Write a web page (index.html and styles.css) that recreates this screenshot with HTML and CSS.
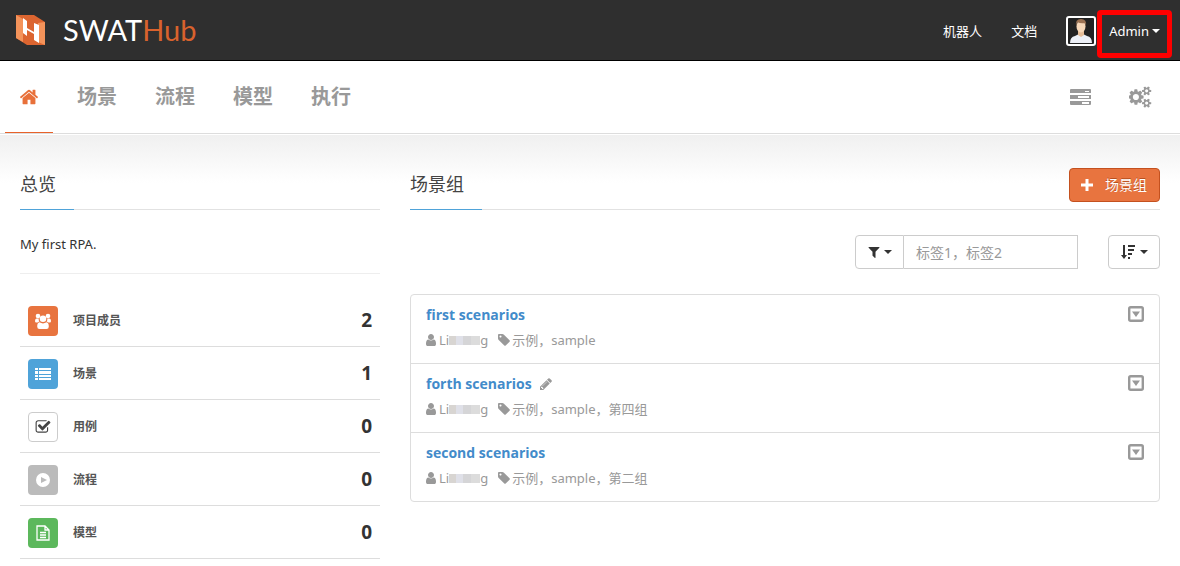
FILE: index.html
```html
<!DOCTYPE html>
<html lang="zh-CN">
<head>
<meta charset="utf-8">
<meta name="viewport" content="width=device-width, initial-scale=1">
<title>SWATHub</title>
<link rel="stylesheet" href="styles.css">
</head>
<body>
<svg class="sprite" aria-hidden="true">
  <symbol id="home" viewBox="0 0 1792 1792"><path d="M1472 992v480q0 26-19 45t-45 19h-384v-384h-256v384h-384q-26 0-45-19t-19-45v-480q0-1 .5-3t.5-3l575-474 575 474q1 2 1 6zm223-69l-62 74q-8 9-21 11h-3q-13 0-21-7l-692-577-692 577q-12 8-24 7-13-2-21-11l-62-74q-8-10-7-23.5t11-21.5l719-599q32-26 76-26t76 26l244 204v-195q0-14 9-23t23-9h192q14 0 23 9t9 23v408l219 182q10 8 11 21.5t-7 23.5z"/></symbol>
  <symbol id="user" viewBox="0 0 1792 1792"><path d="M1536 1399q0 109-62.500 187t-150.500 78h-854q-88 0-150.500-78t-62.500-187q0-85 8.500-160.500t31.500-152 58.500-131 94-89 134.500-34.500q131 128 313 128t313-128q76 0 134.500 34.500t94 89 58.500 131 31.500 152 8.500 160.500zm-256-887q0 159-112.500 271.500t-271.500 112.500-271.500-112.500-112.500-271.500 112.500-271.500 271.500-112.500 271.500 112.500 112.500 271.500z"/></symbol>
  <symbol id="tag" viewBox="0 0 1792 1792"><path d="M576 448q0-53-37.500-90.500t-90.500-37.500-90.500 37.500-37.500 90.500 37.500 90.500 90.500 37.500 90.500-37.500 37.500-90.500zm1067 576q0 53-37 90l-491 492q-39 37-91 37-53 0-90-37l-715-716q-38-37-64.500-101t-26.500-117v-416q0-52 38-90t90-38h416q53 0 117 26.500t102 64.500l715 714q37 39 37 91z"/></symbol>
  <symbol id="pencil" viewBox="0 0 1792 1792"><path d="M491 1536l91-91-235-235-91 91v107h128v128h107zm523-928q0-22-22-22-10 0-17 7l-542 542q-7 7-7 17 0 22 22 22 10 0 17-7l542-542q7-7 7-17zm-54-192l416 416-832 832h-416v-416zm683 96q0 53-37 90l-166 166-416-416 166-165q36-38 90-38 53 0 91 38l235 234q37 39 37 91z"/></symbol>
  <symbol id="filter" viewBox="0 0 1792 1792"><path d="M1595 295q17 41-14 70l-493 493v742q0 42-39 59-13 5-25 5-27 0-45-19l-256-256q-19-19-19-45v-486l-493-493q-31-29-14-70 17-39 59-39h1280q42 0 59 39z"/></symbol>
  <symbol id="check" viewBox="0 0 1792 1792"><path d="M1472 930v318q0 119-84.500 203.500t-203.500 84.500h-832q-119 0-203.500-84.500t-84.500-203.500v-832q0-119 84.500-203.500t203.500-84.500h832q63 0 117 25 15 7 18 23 3 17-9 29l-49 49q-10 10-23 10-3 0-9-2-23-6-45-6h-832q-66 0-113 47t-47 113v832q0 66 47 113t113 47h832q66 0 113-47t47-113v-254q0-13 9-22l64-64q10-10 23-10 6 0 12 3 20 8 20 29zm231-489l-814 814q-24 24-57 24t-57-24l-430-430q-24-24-24-57t24-57l110-110q24-24 57-24t57 24l263 263 647-647q24-24 57-24t57 24l110 110q24 24 24 57t-24 57z"/></symbol>
  <symbol id="cogs" viewBox="0 0 1920 1792"><path d="M832 896q0-106-75-181t-181-75-181 75-75 181 75 181 181 75 181-75 75-181zm768 512q0-52-38-90t-90-38-90 38-38 90q0 53 37.500 90.500t90.500 37.500 90.500-37.500 37.500-90.500zm0-1024q0-52-38-90t-90-38-90 38-38 90q0 53 37.500 90.500t90.500 37.500 90.500-37.500 37.500-90.500zm-384 421v185q0 10-7 19.500t-16 10.500l-155 24q-11 35-32 76 34 48 90 115 7 11 7 20 0 12-7 19-23 30-82.500 89.500t-78.500 59.500q-11 0-21-7l-115-90q-37 19-77 31-11 108-23 155-7 24-30 24h-186q-11 0-20-7.500t-10-17.500l-23-153q-34-10-75-31l-118 89q-7 7-20 7-11 0-21-8-144-133-144-160 0-9 7-19 10-14 41-53t47-61q-23-44-35-82l-152-24q-10-1-17-9.500t-7-19.500v-185q0-10 7-19.500t16-10.500l155-24q11-35 32-76-34-48-90-115-7-11-7-20 0-12 7-20 22-30 82-89t79-59q11 0 21 7l115 90q34-18 77-32 11-108 23-154 7-24 30-24h186q11 0 20 7.500t10 17.500l23 153q34 10 75 31l118-89q8-7 20-7 11 0 21 8 144 133 144 160 0 8-7 19-12 16-42 54t-45 60q23 48 34 82l152 23q10 2 17 10.500t7 19.500zm640 533v140q0 16-149 31-12 27-30 52 51 113 51 138 0 4-4 7-122 71-124 71-8 0-46-47t-52-68q-20 2-30 2t-30-2q-14 21-52 68t-46 47q-2 0-124-71-4-3-4-7 0-25 51-138-18-25-30-52-149-15-149-31v-140q0-16 149-31 13-29 30-52-51-113-51-138 0-4 4-7 4-2 35-20t59-34 30-16q8 0 46 46.500t52 67.500q20-2 30-2t30 2q51-71 92-112l6-2q4 0 124 70 4 3 4 7 0 25-51 138 17 23 30 52 149 15 149 31zm0-1024v140q0 16-149 31-12 27-30 52 51 113 51 138 0 4-4 7-122 71-124 71-8 0-46-47t-52-68q-20 2-30 2t-30-2q-14 21-52 68t-46 47q-2 0-124-71-4-3-4-7 0-25 51-138-18-25-30-52-149-15-149-31v-140q0-16 149-31 13-29 30-52-51-113-51-138 0-4 4-7 4-2 35-20t59-34 30-16q8 0 46 46.500t52 67.500q20-2 30-2t30 2q51-71 92-112l6-2q4 0 124 70 4 3 4 7 0 25-51 138 17 23 30 52 149 15 149 31z"/></symbol>
  <symbol id="tasks" viewBox="0 0 21 16"><path fill-rule="evenodd" d="M1 0h19q1 0 1 1v3H0V1q0-1 1-1zm14 2v1h4V2zM0 6h21v4H0zm8 1v2h11V7zM0 12h21v3q0 1-1 1H1q-1 0-1-1zm12 1v2h7v-2z"/></symbol>
  <symbol id="users" viewBox="0 0 18 18"><circle cx="4" cy="4" r="2.300"/><circle cx="14" cy="4" r="2.300"/><path d="M1 9q0-2.500 1.500-2.500h2.200q-.3 2 .7 3-1.200.3-1.800 1H2.200Q1 10.500 1 9zM17 9q0-2.500-1.500-2.500h-2.200q.3 2-.7 3 1.200.3 1.800 1h1.400q1.200 0 1.200-1.500z"/><circle cx="9" cy="6.800" r="3.300"/><path d="M5.500 10.300q3.500 2.200 7 0 2.300.5 2.300 4.200 0 2.500-2.300 2.500h-7q-2.300 0-2.300-2.500 0-3.700 2.300-4.200z"/></symbol>
  <symbol id="list" viewBox="0 0 16 12"><path d="M0 0h3v2H0zM4 0h12v2H4zM0 3h3v3H0zM4 3h12v3H4zM0 7h3v2H0zM4 7h12v2H4zM0 10h3v2H0zM4 10h12v2H4z"/></symbol>
  <symbol id="play" viewBox="0 0 14 14"><path fill-rule="evenodd" d="M7 0a7 7 0 1 1 0 14a7 7 0 1 1 0-14zM5 4v6l6-3z"/></symbol>
  <symbol id="file" viewBox="0 0 14 16"><path fill="none" stroke="currentColor" stroke-width="1.300" d="M1 1h8l4 4v10H1zM9 1v4h4M4 7.500h6M4 10h6M4 12.500h6"/></symbol>
  <symbol id="plus" viewBox="0 0 12 12"><path d="M4.500 0h3v4.500H12v3H7.500V12h-3V7.500H0v-3h4.500z"/></symbol>
  <symbol id="sort" viewBox="0 0 14 14"><path d="M2 0h2v10h2l-3 4-3-4h2zM7 0h7v2H7zM7 4h6v2H7zM7 8h4v2H7zM7 12h2v2H7z"/></symbol>
  <symbol id="drop" viewBox="0 0 16 16"><rect x="1.200" y="1.200" width="13.600" height="13.600" rx="1.500" fill="none" stroke="currentColor" stroke-width="2.400"/><path d="M4 5.500h8L8 11z"/></symbol>
</svg>

<header class="topbar">
  <a class="brand" href="#">
    <svg class="brand-mark" viewBox="0 0 30 30" aria-hidden="true">
      <path fill="#dc6530" d="M0 0h18l11 7v23H11L0 23z"/>
      <path fill="#f4935a" d="M0 0l7 4v23L0 23z"/>
      <path fill="#f4935a" d="M22 8l7-1v23l-7-3z"/>
      <path fill="#fff" d="M7 3l4 3v7l7 4V8l5 2v18l-5-3v-6l-7-4v6l-4-3z"/>
    </svg>
    <span class="brand-name">SWAT<span class="brand-hub">Hub</span></span>
  </a>
  <nav class="account">
    <a href="#">机器人</a>
    <a href="#">文档</a>
    <button class="user-menu" type="button">
      <svg class="avatar" viewBox="0 0 30 30" aria-hidden="true">
        <rect x="1" y="1" width="28" height="28" rx="2" fill="#222" stroke="#fff" stroke-width="2"/>
        <path fill="#edf0f7" d="M4 27q0-6 5-7l4-2h4l4 2q5 1 5 7z"/>
        <path fill="#e6bd98" d="M12 14h6v5l-3 2-3-2z"/>
        <ellipse cx="15" cy="10.500" rx="4.500" ry="6" fill="#f7d8b9"/>
        <path fill="#9d7354" d="M10 10q-1-7 5-7t5 7l-1-3q-4 1-8-1z"/>
      </svg>
      <span class="user-name">Admin<i class="caret"></i></span>
    </button>
  </nav>
</header>

<nav class="mainnav">
  <a class="tab active" href="#" aria-label="主页"><svg class="i20"><use href="#home"/></svg></a>
  <a class="tab" href="#">场景</a>
  <a class="tab" href="#">流程</a>
  <a class="tab" href="#">模型</a>
  <a class="tab" href="#">执行</a>
  <div class="tools">
    <a href="#" aria-label="任务"><svg class="tasks"><use href="#tasks"/></svg></a>
    <a href="#" aria-label="设置"><svg class="cogs"><use href="#cogs"/></svg></a>
  </div>
</nav>

<main class="page">
  <section class="overview">
    <div class="head"><h2>总览</h2></div>
    <p class="desc">My first RPA.</p>
    <ul class="stats">
      <li><span class="badge orange"><svg class="i18"><use href="#users"/></svg></span><span class="label">项目成员</span><b>2</b></li>
      <li><span class="badge blue"><svg class="i16"><use href="#list"/></svg></span><span class="label">场景</span><b>1</b></li>
      <li><span class="badge plain"><svg class="i16"><use href="#check"/></svg></span><span class="label">用例</span><b>0</b></li>
      <li><span class="badge gray"><svg class="i14"><use href="#play"/></svg></span><span class="label">流程</span><b>0</b></li>
      <li><span class="badge green"><svg class="i16"><use href="#file"/></svg></span><span class="label">模型</span><b>0</b></li>
    </ul>
  </section>

  <section class="groups">
    <div class="head">
      <h2>场景组</h2>
      <button class="primary" type="button"><svg class="i12"><use href="#plus"/></svg>场景组</button>
    </div>
    <div class="filters">
      <div class="search">
        <button class="btn" type="button" aria-label="过滤"><svg class="i14"><use href="#filter"/></svg><i class="caret"></i></button>
        <input type="text" placeholder="标签1，标签2" aria-label="标签">
      </div>
      <button class="btn sort" type="button" aria-label="排序"><svg class="i14"><use href="#sort"/></svg><i class="caret"></i></button>
    </div>
    <ul class="list">
      <li>
        <div class="info">
          <div class="title"><a href="#">first scenarios</a></div>
          <div class="meta"><svg class="i14"><use href="#user"/></svg><span class="owner">Li<i class="mask"></i>g</span><svg class="i14"><use href="#tag"/></svg><span>示例，sample</span></div>
        </div>
        <button class="more" type="button" aria-label="更多"><svg class="i16"><use href="#drop"/></svg></button>
      </li>
      <li>
        <div class="info">
          <div class="title"><a href="#">forth scenarios</a><svg class="i14"><use href="#pencil"/></svg></div>
          <div class="meta"><svg class="i14"><use href="#user"/></svg><span class="owner">Li<i class="mask"></i>g</span><svg class="i14"><use href="#tag"/></svg><span>示例，sample，第四组</span></div>
        </div>
        <button class="more" type="button" aria-label="更多"><svg class="i16"><use href="#drop"/></svg></button>
      </li>
      <li>
        <div class="info">
          <div class="title"><a href="#">second scenarios</a></div>
          <div class="meta"><svg class="i14"><use href="#user"/></svg><span class="owner">Li<i class="mask"></i>g</span><svg class="i14"><use href="#tag"/></svg><span>示例，sample，第二组</span></div>
        </div>
        <button class="more" type="button" aria-label="更多"><svg class="i16"><use href="#drop"/></svg></button>
      </li>
    </ul>
  </section>
</main>
</body>
</html>
```
FILE: styles.css
```css
* { box-sizing: border-box; }
body {
  margin: 0;
  background: #fff;
  color: #333;
  font: 13px/20px "Noto Sans", "Noto Sans CJK SC", sans-serif;
}
a { color: inherit; text-decoration: none; }
h2, p, ul { margin: 0; padding: 0; }
ul { list-style: none; }
button, input { font: inherit; color: inherit; }
button { cursor: pointer; }
svg { display: block; flex: none; fill: currentColor; }
.sprite { position: absolute; width: 0; height: 0; }
.i12 { width: 12px; height: 12px; }
.i14 { width: 14px; height: 14px; }
.i16 { width: 16px; height: 16px; }
.i18 { width: 18px; height: 18px; }
.i20 { width: 20px; height: 20px; }
.caret {
  display: inline-block;
  border: 4px solid transparent;
  border-top-color: currentColor;
  border-bottom: 0;
}

.topbar {
  display: flex;
  justify-content: space-between;
  align-items: center;
  height: 61px;
  padding: 0 20px 0 16px;
  background: #2f2f2f;
  border-bottom: 1px solid #000;
  color: #fff;
}
.brand { display: flex; align-items: center; gap: 17px; }
.brand-mark { width: 30px; height: 30px; }
.brand-name { font: 29px/40px Lato, sans-serif; }
.brand-hub { color: #d9622d; }
.account { display: flex; align-items: center; gap: 29px; padding-top: 1px; }
.user-menu {
  display: flex;
  align-items: center;
  gap: 13px;
  padding: 0;
  border: 0;
  background: none;
}
.avatar { width: 30px; height: 30px; }
.user-name { position: relative; display: flex; align-items: center; gap: 3px; }
.user-name::after {
  content: "";
  position: absolute;
  inset: -11px -12px -17px;
  border: 5px solid #f00;
  border-radius: 4px;
}

.mainnav {
  display: flex;
  height: 73px;
  padding: 0 28px 0 5px;
  border-bottom: 1px solid #ddd;
  color: #999;
}
.tab {
  display: flex;
  align-items: center;
  justify-content: center;
  width: 78px;
  font-size: 20px;
  font-weight: 700;
}
.tab.active {
  width: 48px;
  margin-right: 5px;
  border-bottom: 1px solid #e8622a;
  color: #e8703a;
}
.tools { display: flex; align-items: center; gap: 38px; margin-left: auto; }
.tasks { width: 21px; height: 16px; }
.cogs { width: 23px; height: 22px; }

.page {
  display: grid;
  grid-template-columns: 360px 1fr;
  gap: 30px;
  margin-top: 1px;
  padding: 29px 20px 0;
  background: linear-gradient(#f0f0f0, #fff 48px);
}
.head {
  display: flex;
  justify-content: space-between;
  height: 46px;
  border-bottom: 1px solid #e2e2e2;
}
.head h2 {
  height: 46px;
  padding-right: 18px;
  border-bottom: 1px solid #4fa3d9;
  color: #444;
  font-size: 18px;
  font-weight: 400;
  line-height: 40px;
}
.desc { margin-bottom: 20px; padding: 24px 0 19px; border-bottom: 1px solid #eee; }
.stats li {
  display: flex;
  align-items: center;
  height: 53px;
  padding: 0 8px;
  border-bottom: 1px solid #ddd;
}
.badge, .label { margin-top: 2px; }
.badge {
  display: flex;
  align-items: center;
  justify-content: center;
  width: 30px;
  height: 30px;
  margin-right: 15px;
  border-radius: 4px;
  color: #fff;
}
.orange { background: #e8743f; }
.blue { background: #4fa3d9; }
.plain { border: 1px solid #ccc; color: #444; }
.gray { background: #bbb; }
.green { background: #5cb85c; }
.label { font-size: 12px; font-weight: 700; color: #555; }
.stats b { margin-left: auto; font-size: 19px; }

.primary {
  display: flex;
  align-items: center;
  gap: 12px;
  height: 34px;
  margin-top: 4px;
  padding: 0 12px 0 11px;
  border: 1px solid #c4511f;
  border-radius: 4px;
  background: #e8743f;
  color: #fff;
  font-size: 14px;
  text-shadow: 0 -1px 0 #b85020;
}
.filters { display: flex; justify-content: flex-end; gap: 30px; margin: 25px 0; }
.search { display: flex; }
.btn {
  display: flex;
  align-items: center;
  justify-content: center;
  gap: 3px;
  width: 49px;
  height: 34px;
  padding: 0;
  border: 1px solid #ccc;
  border-radius: 4px 0 0 4px;
  background: #fff;
}
.btn.sort { gap: 5px; width: 52px; border-radius: 4px; }
.search input {
  width: 174px;
  height: 34px;
  padding: 0 12px;
  border: 1px solid #ccc;
  border-left: 0;
  background: #fff;
  font-size: 14px;
}
.search input::placeholder { color: #999; opacity: 1; }

.list { border: 1px solid #ddd; border-radius: 4px; }
.list li {
  display: flex;
  justify-content: space-between;
  align-items: flex-start;
  padding: 10px 15px 13px;
}
.list li + li { border-top: 1px solid #ddd; }
.title { display: flex; align-items: center; gap: 7px; margin-bottom: 5px; color: #999; }
.title a { color: #428bca; font-family: "Open Sans", sans-serif; font-size: 14px; font-weight: 700; }
.meta { display: flex; align-items: center; color: #999; }
.meta svg:first-child { margin-left: -2px; }
.meta svg { margin-right: 1px; }
.owner { display: flex; align-items: center; margin-right: 9px; }
.mask {
  width: 31px;
  height: 9px;
  background: linear-gradient(90deg, #d8d5d2 7px, #dfe0e8 7px 14px, #d5d5d7 14px 22px, #dcdcdc 22px);
}
.more { margin-top: 1px; padding: 0; border: 0; background: none; color: #999; }
```
